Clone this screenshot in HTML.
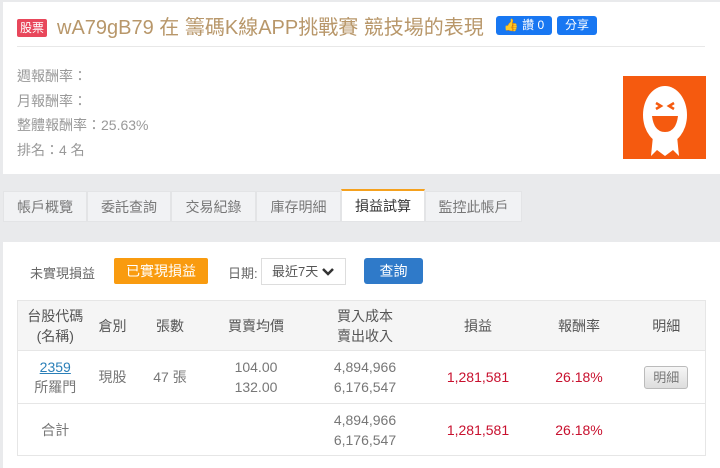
<!DOCTYPE html>
<html><head><meta charset="utf-8"><style>
*{margin:0;padding:0;box-sizing:border-box}
body{width:720px;height:468px;overflow:hidden;background:#e9eaec;font-family:"Liberation Sans","Noto Sans CJK TC",sans-serif;position:relative;color:#666}
.abs{position:absolute}
.card{position:absolute;background:#fff;left:3px;right:0}
.tab{position:absolute;top:191px;height:31px;background:#f1f2f4;border:1px solid #e3e4e6;font-size:14px;color:#777;text-align:center;line-height:30px}
.tbl{position:absolute;left:17px;top:300px;width:689px;border:1px solid #e6e6e6;border-collapse:collapse;font-size:14px;color:#777}
.tbl td{text-align:center;border-top:1px solid #e6e6e6;line-height:20px;padding:0}
.red{color:#c8102e}
</style></head><body>
<div class="card" style="top:2px;height:172px"></div>
<div class="abs" style="left:17px;top:19px;width:30px;height:18px;background:#e8475b;border-radius:2px;color:#fff;font-size:12px;line-height:18px;text-align:center">股票</div>
<div class="abs" style="left:57px;top:16px;font-size:20px;color:#b8976a;line-height:24px">wA79gB79 在 籌碼K線APP挑戰賽 競技場的表現</div>
<div class="abs" style="left:496px;top:16px;width:56px;height:19px;background:#1877f2;border-radius:3px;color:#fff;font-size:12px;line-height:19px;text-align:center">👍 讚 0</div>
<div class="abs" style="left:557px;top:16px;width:40px;height:19px;background:#1877f2;border-radius:3px;color:#fff;font-size:12px;line-height:19px;text-align:center">分享</div>
<div class="abs" style="left:17px;top:46px;width:688px;height:1px;background:#e8e8e8"></div>
<div class="abs" style="left:17px;top:64px;font-size:14px;line-height:24.7px;color:#999">週報酬率：<br>月報酬率：<br>整體報酬率：25.63%<br>排名：4 名</div>
<div class="abs" style="left:623px;top:76px;width:83px;height:83px;background:#f55a0f">
<svg width="83" height="83" viewBox="0 0 83 83"><ellipse cx="42" cy="39" rx="22" ry="29" fill="#fff"/><path d="M28 80 L30 60 L54 60 L56 80 L50 74 L42 80 L34 74Z" fill="#fff"/><path d="M29 40 h26 q-2 16 -13 16 q-11 0 -13 -16z" fill="#f55a0f"/><path d="M33 27 l5 3 l-5 3 M51 27 l-5 3 l5 3" stroke="#f55a0f" stroke-width="2.5" fill="none"/></svg></div>
<div class="tab" style="left:3px;width:84px">帳戶概覽</div>
<div class="tab" style="left:87px;width:84px">委託查詢</div>
<div class="tab" style="left:171px;width:85px">交易紀錄</div>
<div class="tab" style="left:256px;width:85px">庫存明細</div>
<div class="tab" style="left:341px;width:84px;background:#fff;border-top:2px solid #f5a11e;top:189px;height:33px;color:#333">損益試算</div>
<div class="tab" style="left:425px;width:97px">監控此帳戶</div>
<div class="card" style="top:242px;height:226px"></div>
<div class="abs" style="left:30px;top:263px;font-size:13px;color:#666">未實現損益</div>
<div class="abs" style="left:114px;top:258px;width:94px;height:26px;background:#f99b0f;border-radius:2px;color:#fff;font-size:14px;line-height:26px;text-align:center">已實現損益</div>
<div class="abs" style="left:228px;top:263px;font-size:13px;color:#666">日期:</div>
<div class="abs" style="left:261px;top:258px;width:85px;height:27px;border:1px solid #ddd;font-size:13px;line-height:25px;padding-left:10px;color:#555">最近7天 <svg width="12" height="9" viewBox="0 0 12 9"><path d="M1 2 L6 7 L11 2" stroke="#333" stroke-width="2.5" fill="none"/></svg></div>
<div class="abs" style="left:364px;top:258px;width:59px;height:26px;background:#2f7ac9;border-radius:3px;color:#fff;font-size:14px;line-height:26px;text-align:center">查詢</div>
<table class="tbl">
<colgroup><col style="width:75px"><col style="width:40px"><col style="width:75px"><col style="width:97px"><col style="width:121px"><col style="width:105px"><col style="width:97px"><col></colgroup>
<tr style="height:50px;background:#f5f5f5;color:#555"><td>台股代碼<br>(名稱)</td><td>倉別</td><td>張數</td><td>買賣均價</td><td>買入成本<br>賣出收入</td><td>損益</td><td>報酬率</td><td>明細</td></tr>
<tr style="height:53px"><td><span style="color:#2a7fb8;text-decoration:underline">2359</span><br>所羅門</td><td>現股</td><td>47 張</td><td>104.00<br>132.00</td><td>4,894,966<br>6,176,547</td><td class="red">1,281,581</td><td class="red">26.18%</td><td><span style="display:inline-block;width:44px;height:23px;line-height:21px;border:1px solid #bbb;border-radius:3px;background:linear-gradient(#f6f6f6,#ddd);font-size:13px">明細</span></td></tr>
<tr style="height:52px"><td>合計</td><td></td><td></td><td></td><td>4,894,966<br>6,176,547</td><td class="red">1,281,581</td><td class="red">26.18%</td><td></td></tr>
</table>
</body></html>
